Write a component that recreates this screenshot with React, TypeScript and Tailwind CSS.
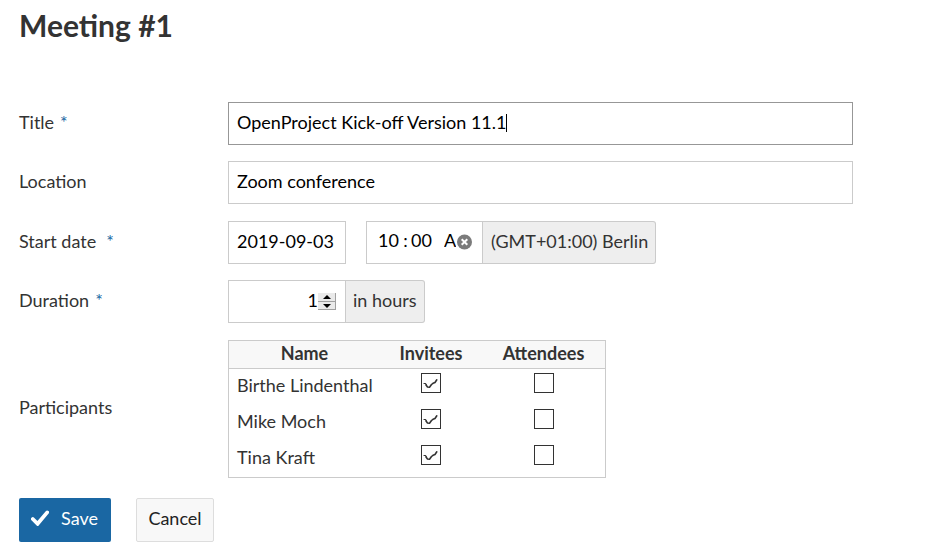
import type { ReactNode } from "react";

const participants = [
  { id: "birthe", name: "Birthe Lindenthal", invited: true, attended: false },
  { id: "mike", name: "Mike Moch", invited: true, attended: false },
  { id: "tina", name: "Tina Kraft", invited: true, attended: false },
];

const box = "h-[43px] border border-[#cbcbcb] bg-white text-black outline-none";
const addon =
  "flex h-[43px] items-center rounded-r-[3px] border border-l-0 border-[#cbcbcb] bg-[#eeeeee] px-[7px] pb-[3px] text-[#333333]";

function Row({
  label,
  htmlFor,
  required,
  wide,
  children,
}: {
  label: string;
  htmlFor?: string;
  required?: boolean;
  wide?: boolean;
  children: ReactNode;
}) {
  const text = (
    <>
      {label}
      {required && (
        <span className={wide ? "ml-2.5 text-[#1a67a3]" : "ml-1.5 text-[#1a67a3]"}>*</span>
      )}
    </>
  );
  return (
    <div className="flex items-center">
      {htmlFor ? (
        <label htmlFor={htmlFor} className="w-[209px] shrink-0 pb-1">
          {text}
        </label>
      ) : (
        <div className="w-[209px] shrink-0 pb-1">{text}</div>
      )}
      <div className="flex min-w-0 flex-1">{children}</div>
    </div>
  );
}

function Tick({ label, checked }: { label: string; checked: boolean }) {
  return (
    <span className="inline-grid align-top">
      <input
        type="checkbox"
        aria-label={label}
        defaultChecked={checked}
        className="peer col-start-1 row-start-1 size-5 appearance-none border border-[#333333] bg-white"
      />
      <svg
        viewBox="0 0 20 20"
        className="pointer-events-none invisible col-start-1 row-start-1 size-5 peer-checked:visible"
        fill="none"
        stroke="#333333"
        strokeLinecap="round"
        strokeLinejoin="round"
      >
        <path d="M3 10.5H4.5L5.5 12" strokeWidth="1.2" />
        <path d="M5 12 6.5 14 8.5 14.2 10.5 11.5 12 10.3 14 9.5 15.8 6.8" strokeWidth="1.6" />
      </svg>
    </span>
  );
}

export default function App() {
  return (
    <main className="min-h-screen bg-white pt-[7px] pr-[89px] pb-[18px] pl-[19px] font-['Lato','Liberation_Sans',sans-serif] text-[18px] leading-6 text-[#333333]">
      <h1 className="text-[30px] leading-9 font-bold">Meeting #1</h1>

      <form className="mt-[59px]" onSubmit={(e) => e.preventDefault()}>
        <div className="flex flex-col gap-[17px]">
          <div className="flex flex-col gap-4">
            <Row label="Title" htmlFor="title" required>
              <div className="relative flex-1">
                <input
                  id="title"
                  type="text"
                  required
                  defaultValue="OpenProject Kick-off Version 11.1"
                  className="block h-[43px] w-full border border-[#979797] bg-white px-2 pb-[3px] text-black caret-transparent outline-none"
                />
                <span className="absolute top-3 left-[278px] h-[18px] w-px bg-black" />
              </div>
            </Row>
            <Row label="Location" htmlFor="location">
              <input
                id="location"
                type="text"
                defaultValue="Zoom conference"
                className={`${box} w-full px-2 pb-[3px]`}
              />
            </Row>
          </div>

          <div className="flex flex-col gap-4">
            <Row label="Start date" htmlFor="date" required wide>
              <input
                id="date"
                type="text"
                required
                defaultValue="2019-09-03"
                className={`${box} w-[118px] px-2 pb-[3px]`}
              />
              <div
                role="group"
                aria-label="Start time"
                className={`${box} ml-5 flex w-[117px] items-center pb-[5px] pl-[11px]`}
              >
                <input aria-label="Hours" defaultValue="10" className="w-[22px] outline-none" />
                <span className="w-[11px] text-center">:</span>
                <input aria-label="Minutes" defaultValue="00" className="w-[22px] outline-none" />
                <input
                  aria-label="Period"
                  defaultValue="AM"
                  className="ml-[11px] w-3 outline-none"
                />
                <button type="button" aria-label="Clear time" className="mt-[3px] ml-px">
                  <svg viewBox="0 0 16 16" className="block size-4">
                    <circle cx="7.5" cy="8" r="7.5" fill="#7b7b7b" />
                    <path
                      d="M4.7 5.2 10.3 10.8M10.3 5.2 4.7 10.8"
                      stroke="#ffffff"
                      strokeWidth="2"
                    />
                  </svg>
                </button>
              </div>
              <span className={`${addon} pl-2`}>(GMT+01:00) Berlin</span>
            </Row>
            <Row label="Duration" htmlFor="duration" required>
              <div className={`${box} flex w-[118px] items-center pr-[9px]`}>
                <input
                  id="duration"
                  type="text"
                  inputMode="numeric"
                  required
                  defaultValue="1"
                  className="min-w-0 flex-1 pb-[3px] text-right outline-none"
                />
                <div className="flex h-[17px] w-[18px] flex-col gap-px bg-[#a0a0a0]">
                  <button
                    type="button"
                    aria-label="Increase duration"
                    className="flex h-2 items-center justify-center border-r border-[#a0a0a0] bg-[#eaeaea]"
                  >
                    <svg viewBox="0 0 8 4" className="h-1 w-2">
                      <path d="M0 4 4 0 8 4z" fill="#000000" />
                    </svg>
                  </button>
                  <button
                    type="button"
                    aria-label="Decrease duration"
                    className="flex h-2 items-center justify-center border-r border-b border-[#a0a0a0] bg-[#eaeaea]"
                  >
                    <svg viewBox="0 0 8 4" className="h-1 w-2">
                      <path d="M0 0 4 4 8 0z" fill="#000000" />
                    </svg>
                  </button>
                </div>
              </div>
              <span className={addon}>in hours</span>
            </Row>
          </div>

          <Row label="Participants">
            <table
              aria-label="Participants"
              className="w-[378px] table-fixed border-separate border-spacing-0 border border-[#cbcbcb]"
            >
              <colgroup>
                <col className="w-[151px]" />
                <col className="w-[102px]" />
                <col />
              </colgroup>
              <thead>
                <tr className="h-7 bg-[#f8f8f8]">
                  <th className="border-b border-[#cbcbcb] p-0 pb-[3px] font-bold">Name</th>
                  <th className="border-b border-[#cbcbcb] p-0 pb-[3px] font-bold">Invitees</th>
                  <th className="border-b border-[#cbcbcb] p-0 pb-[3px] font-bold">Attendees</th>
                </tr>
              </thead>
              <tbody>
                {participants.map((p) => (
                  <tr key={p.id} className="h-9">
                    <td className="p-0 pt-1 pl-2 align-top whitespace-nowrap">{p.name}</td>
                    <td className="p-0 pt-1 text-center align-top">
                      <Tick label={`Invite ${p.name}`} checked={p.invited} />
                    </td>
                    <td className="p-0 pt-1 text-center align-top">
                      <Tick label={`${p.name} attended`} checked={p.attended} />
                    </td>
                  </tr>
                ))}
              </tbody>
            </table>
          </Row>
        </div>

        <div className="mt-5 flex gap-[25px]">
          <button
            type="submit"
            className="flex h-11 w-[92px] items-center rounded-[2px] bg-[#1a67a3] pb-1 pl-3 text-white"
          >
            <svg viewBox="0 0 18 16" className="mr-3 h-4 w-[18px]">
              <path
                d="M1.8 9 6.6 13.8 16.2 2.4"
                fill="none"
                stroke="#ffffff"
                strokeWidth="3.8"
                strokeLinejoin="miter"
                strokeLinecap="round"
              />
            </svg>
            Save
          </button>
          <button
            type="button"
            className="h-11 w-[78px] rounded-[2px] border border-[#dddddd] bg-[#f8f8f8] pb-1 text-[#222222]"
          >
            Cancel
          </button>
        </div>
      </form>
    </main>
  );
}
